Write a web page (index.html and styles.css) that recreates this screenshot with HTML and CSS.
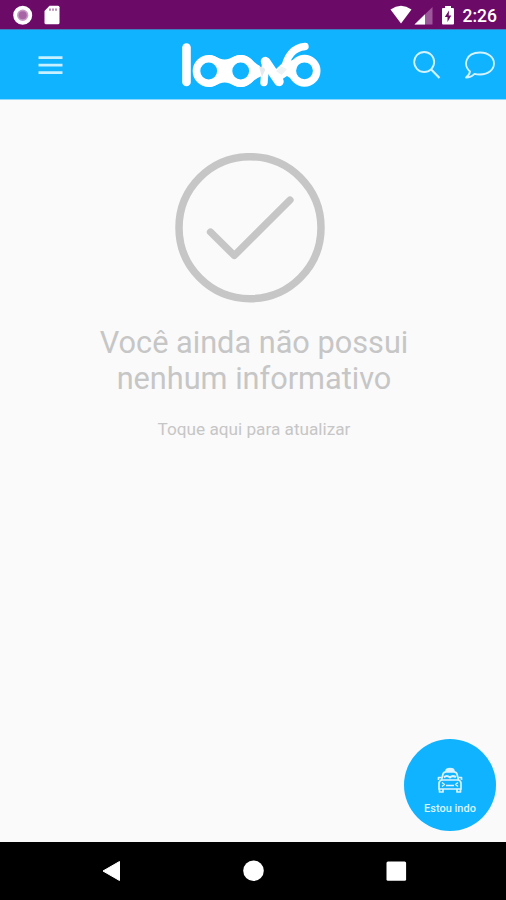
FILE: index.html
```html
<!DOCTYPE html>
<html lang="pt-BR">
  <head>
    <meta charset="UTF-8" />
    <meta name="viewport" content="width=device-width, initial-scale=1.0" />
    <title>Informativos</title>
    <link rel="stylesheet" href="styles.css">
  </head>
  <body>
    <div class="status-bar">
      <svg class="status-left" width="20" height="20" viewBox="0 0 20 20">
        <circle cx="9.7" cy="10.2" r="7.6" fill="#c79bc6" stroke="#fff" stroke-width="3.8" />
        <circle cx="9.7" cy="10.2" r="4" fill="#a865a6" />
      </svg>
      <svg class="status-card" width="16" height="20" viewBox="0 0 16 20">
        <path d="M5.5 .8H14Q15.5.8 15.5 2.3V17.7Q15.5 19.3 14 19.3H2Q.5 19.3.5 17.7V6Z" fill="#fff" />
        <path d="M6 3.5V5.7M9 3.5V5.7M12 3.5V5.7" stroke="#96598f" stroke-width="1.3" />
      </svg>
      <div class="status-right">
        <svg width="73" height="20" viewBox="0 0 73 20">
          <path d="M.5 4.5Q11 -2.8 21.5 4.5L11 18.5Z" fill="#fff" />
          <path d="M24.5 19.5L42.5 2V19.5Z" fill="#9d579b" />
          <path d="M24.5 19.5L35 9.3V19.5Z" fill="#fff" />
          <path d="M55 1H61V3H63Q64 3 64 4V18.5Q64 19.5 63 19.5H53Q52 19.5 52 18.5V4Q52 3 53 3H55Z" fill="#fff" />
          <path d="M59 5.5L54.8 12H57.5V17L61.3 10.4H58.7Z" fill="#6c0a67" />
        </svg>
        <span class="clock">2:26</span>
      </div>
    </div>

    <header class="header">
      <button class="icon-btn menu-btn" aria-label="Menu">
        <svg width="26" height="20" viewBox="0 0 26 20">
          <path d="M.5 2.7H24.5M.5 10.2H24.5M.5 17.7H24.5" stroke="#c9f0ff" stroke-width="2.7" />
        </svg>
      </button>
      <svg class="logo" width="142" height="46" viewBox="0 0 142 46" fill="none" stroke="#fff">
        <path d="M6.5 5.5V40" stroke-width="8.6" stroke-linecap="round" />
        <path d="M28.7 13C36 13 38 17.5 44.7 17.5C51.4 17.5 53.4 13 60.7 13C70 13 72 20 80 24L82 34C73 37 70 45 60.7 45C53.400 45 51.400 40.500 44.700 40.500C38 40.500 36 45 28.700 45Z" fill="#fff" stroke="none" />
        <circle cx="28.7" cy="29" r="12.2" stroke-width="7.6" fill="#0fb3ff" />
        <circle cx="60.7" cy="29" r="12.2" stroke-width="7.6" fill="#0fb3ff" />
        <path d="M85.5 22L84 40.500" stroke-width="7.4" stroke-linecap="round" />
        <path d="M79 24.500L86 26L82 35Z" fill="#e3eaee" stroke="none" />
        <path d="M85.500 19.500L99 39.500" stroke-width="9.400" stroke-linecap="round" />
        <path d="M104.500 29C106 14 114 5.300 125 4.500" stroke-width="7.400" stroke-linecap="round" />
        <path d="M95 28L103 20.500L113 18V38L107 34L101 38Z" fill="#fff" stroke="none" />
        <path d="M96 29L101.500 24.500L107 27L101.500 33Z" fill="#edf2f4" stroke="none" />
        <circle cx="124.5" cy="28.800" r="12.2" stroke-width="7.600" fill="#0fb3ff" />
      </svg>
      <div class="header-actions">
        <button class="icon-btn" aria-label="Buscar">
          <svg width="28" height="30" viewBox="0 0 28 30" fill="none" stroke="#d3f2ff" stroke-width="1.8">
            <circle cx="11.2" cy="12" r="10" />
            <path d="M18 19.300L26.500 28" stroke-width="2.2" />
          </svg>
        </button>
        <button class="icon-btn" aria-label="Mensagens">
          <svg width="32" height="28" viewBox="0 0 32 28" fill="none" stroke="#d3f2ff" stroke-width="1.8" stroke-linejoin="round">
            <path d="M6 20.500C-.8 14.500 1 1.500 16 1.500C24.500 1.500 30 6.500 30 12.500C30 18.500 24.500 23.500 16 23.500Q13 23.500 10.500 22.800Q7 26.500 2 26.500Q5.500 24 6 20.500Z" />
          </svg>
        </button>
      </div>
    </header>

    <main class="content">
      <svg class="check" width="150" height="150" viewBox="0 0 150 150" fill="none" stroke="#c6c6c6">
        <circle cx="75" cy="74.700" r="71" stroke-width="7.500" />
        <path d="M35.500 79L59.300 102.500L115 47" stroke-width="7.300" stroke-linecap="round" stroke-linejoin="round" />
      </svg>
      <h1 class="empty-title">Você ainda não possui<br>nenhum informativo</h1>
      <p class="empty-text">Toque aqui para atualizar</p>
    </main>

    <button class="fab">
      <svg width="26" height="26" viewBox="0 0 26 26" fill="none" stroke="#d9f4ff" stroke-width="1.700" stroke-linejoin="round">
        <path d="M9 4Q9 1.500 13 1.500Q17 1.500 17 4Z" fill="#d9f4ff" />
        <path d="M4.500 13L6 7Q6.700 4.800 9 4.800H17Q19.300 4.800 20 7L21.500 13" />
        <path d="M4.500 13Q2 14 2 16.500V22H24V16.500Q24 14 21.500 13Z" />
        <path d="M2.500 22V25H6V22M20 22V25H23.500V22M4.500 10.500H1.500V13M21.500 10.500H24.500V13M9 18.500H17" />
        <path d="M7 10.500Q9.500 7.500 13 10.500Q15 8 19 10" stroke-width="2" />
        <path d="M5 15.500L7.500 17.500L5 19.500M21 15.500L18.500 17.500L21 19.500" stroke-width="1.400" />
      </svg>
      <span class="fab-label">Estou indo</span>
    </button>

    <nav class="nav-bar">
      <svg width="22" height="22" viewBox="0 0 22 22" fill="#fff">
        <path d="M2 11L18.500 1.500V20.500Z" stroke="#fff" stroke-linejoin="round" />
      </svg>
      <svg width="22" height="22" viewBox="0 0 22 22" fill="#fff">
        <circle cx="10.500" cy="10.800" r="10.300" />
      </svg>
      <svg width="22" height="22" viewBox="0 0 22 22" fill="#fff">
        <rect x="1.500" y="1.500" width="19.600" height="19.300" rx="1.500" />
      </svg>
    </nav>
  </body>
</html>
```

FILE: styles.css
```css
body {
  margin: 0;
  height: 900px;
  display: flex;
  flex-direction: column;
  font-family: Roboto, sans-serif;
  background-color: #fafafa;
  overflow: hidden;
}
svg {
  display: block;
  flex-shrink: 0;
}
button {
  padding: 0;
  border: none;
  background: none;
  font-family: inherit;
  cursor: pointer;
}
.status-bar {
  display: flex;
  align-items: flex-start;
  height: 30px;
  box-sizing: border-box;
  padding: 5px 9px 0 13px;
  background-color: #6c0a67;
  border-bottom: 1px solid #3f7fc0;
}
.status-card {
  margin-left: 11px;
}
.status-right {
  display: flex;
  margin-left: auto;
}
.clock {
  font-size: 17.5px;
  font-weight: 500;
  line-height: 23px;
  color: #fff;
}
.header {
  display: flex;
  align-items: center;
  height: 70px;
  box-sizing: border-box;
  padding: 0 10px 0 38px;
  background-color: #0fb3ff;
  border-bottom: 1px solid #8bdafd;
}
.logo {
  margin-left: 116px;
}
.header-actions {
  display: flex;
  align-items: center;
  gap: 23px;
  margin-left: auto;
}
.content {
  flex: 1;
  display: flex;
  flex-direction: column;
  align-items: center;
  padding-top: 53px;
  color: #c6c6c6;
  text-align: center;
}
.check {
  margin-right: 6px;
}
.empty-title {
  margin: 22px 0 0 2px;
  font-size: 30.7px;
  font-weight: 400;
  line-height: 36px;
}
.empty-text {
  margin: 22px 0 0 2px;
  font-size: 17.2px;
  line-height: 20px;
}
/* floating button over the content */
.fab {
  position: absolute;
  right: 10px;
  bottom: 69px;
  display: flex;
  flex-direction: column;
  align-items: center;
  width: 92px;
  height: 92px;
  padding-top: 28px;
  border-radius: 50%;
  background-color: #0fb3ff;
}
.fab-label {
  margin-top: 9px;
  font-size: 11px;
  font-weight: 500;
  line-height: 13px;
  color: #d9f4ff;
}
.nav-bar {
  display: flex;
  justify-content: space-between;
  align-items: center;
  height: 58px;
  box-sizing: border-box;
  padding: 0 99px 0 101px;
  background-color: #000;
}
```
